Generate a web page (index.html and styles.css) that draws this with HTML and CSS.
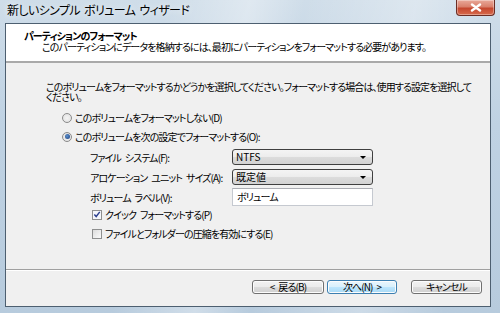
FILE: index.html
```html
<!DOCTYPE html>
<html lang="ja">
<head>
<meta charset="utf-8">
<title>新しいシンプル ボリューム ウィザード</title>
<link rel="stylesheet" href="styles.css">
</head>
<body>
<div class="window">
  <div class="titlebar">
    <span class="title">新しいシンプル ボリューム ウィザード</span>
    <span class="close"><svg width="14" height="9" viewBox="0 0 14 9"><path d="M3 1.5 L11 7.5 M11 1.5 L3 7.5" stroke="#fff" stroke-width="2.4" stroke-linecap="round"/></svg></span>
  </div>
  <div class="client">
    <div class="header">
      <div class="h-title">パーティションのフォーマット</div>
      <div class="h-sub">このパーティションにデータを格納するには、最初にパーティションをフォーマットする必要があります。</div>
    </div>
    <div class="content">
      <p class="intro">このボリュームをフォーマットするかどうかを選択してください。フォーマットする場合は、使用する設定を選択してください。</p>
      <div class="radio-row first"><span class="radio"></span><span>このボリュームをフォーマットしない(D)</span></div>
      <div class="radio-row"><span class="radio checked"></span><span>このボリュームを次の設定でフォーマットする(O):</span></div>
      <div class="form">
        <span class="label">ファイル システム(F):</span>
        <span class="combo"><span>NTFS</span><i class="arrow"></i></span>
        <span class="label">アロケーション ユニット サイズ(A):</span>
        <span class="combo"><span>既定値</span><i class="arrow"></i></span>
        <span class="label">ボリューム ラベル(V):</span>
        <span class="textbox">ボリューム</span>
      </div>
      <div class="check-row"><span class="check checked"><svg width="9" height="9" viewBox="0 0 9 9"><path d="M1.5 4.5 L3.6 6.8 L7.6 1.6" stroke="#2b3f8f" stroke-width="1.6" fill="none"/></svg></span><span>クイック フォーマットする(P)</span></div>
      <div class="check-row"><span class="check"></span><span>ファイルとフォルダーの圧縮を有効にする(E)</span></div>
    </div>
    <div class="footer">
      <span class="btn">&lt; 戻る(B)</span>
      <span class="btn default">次へ(N) &gt;</span>
      <span class="btn cancel">キャンセル</span>
    </div>
  </div>
</div>
</body>
</html>
```
FILE: styles.css
```css
* { box-sizing: border-box; }
html, body { margin: 0; padding: 0; }
body {
  width: 500px;
  height: 313px;
  overflow: hidden;
  font-family: "Noto Sans CJK JP", "Noto Sans", sans-serif;
  font-feature-settings: "palt";
  font-size: 10px;
  letter-spacing: -0.9px;
  word-spacing: 2.5px;
  color: #000;
}
.window {
  width: 500px;
  height: 313px;
  display: flex;
  flex-direction: column;
  background:
    linear-gradient(100deg, rgba(255,255,255,0) 30%, rgba(255,255,255,0.35) 45%, rgba(255,255,255,0) 55%, rgba(255,255,255,0.3) 75%, rgba(255,255,255,0) 90%),
    linear-gradient(180deg, #cfdde9 0%, #bfd2e3 40%, #b7cbdd 100%);
  padding: 0 9px 6px 5px;
}
.titlebar {
  height: 23px;
  display: flex;
  align-items: flex-start;
  flex: none;
  margin-right: -9px;
}
.title {
  padding-left: 2px;
  margin-top: 3px;
  font-size: 12px;
  letter-spacing: -0.6px;
  word-spacing: 2px;
  line-height: 14px;
  color: #000;
  text-shadow: 0 0 6px rgba(255,255,255,0.9);
}
.close {
  margin-left: auto;
  margin-right: 5px;
  width: 39px;
  height: 16px;
  border: 1px solid #6b2d24;
  border-top: none;
  border-radius: 0 0 4px 4px;
  background: linear-gradient(180deg, #e9a99a 0%, #d9806c 45%, #c5472f 55%, #d76b4c 100%);
  display: flex;
  align-items: center;
  justify-content: center;
  box-shadow: inset 0 0 0 1px rgba(255,255,255,0.35);
}
.client {
  flex: 1;
  display: flex;
  flex-direction: column;
  border: 1px solid #4d5f70;
  background: #f0f0f0;
}
.header {
  background: #fff;
  height: 39px;
  border-bottom: 2px solid #a9a9a9;
  padding: 6px 0 0 18px;
  flex: none;
}
.h-title {
  font-weight: bold;
  line-height: 11px;
}
.h-sub {
  padding-left: 18px;
  line-height: 11px;
}
.content {
  flex: 1;
  padding: 19px 20px 0 40px;
}
.intro {
  margin: 0;
  line-height: 10px;
  width: 428px;
}
.radio-row {
  display: flex;
  align-items: center;
  height: 19px;
  padding-left: 16px;
  gap: 3px;
}
.radio-row.first { margin-top: 6px; }
.radio {
  width: 10px;
  height: 10px;
  border-radius: 50%;
  border: 1px solid #8b8b8b;
  background: radial-gradient(circle, #f4f4f4 0%, #dedede 100%);
  display: flex;
  align-items: center;
  justify-content: center;
}
.radio.checked::after {
  content: "";
  width: 5px;
  height: 5px;
  border-radius: 50%;
  background: radial-gradient(circle at 40% 40%, #5a8fcb, #1d3f7f);
}
.form {
  display: grid;
  grid-template-columns: 142px 141px;
  grid-auto-rows: 20px;
  padding-left: 44px;
  align-items: center;
  margin-top: 1px;
}
.label { white-space: nowrap; }
.combo {
  height: 16px;
  border: 1px solid #3f3f3f;
  border-radius: 3px;
  background: linear-gradient(180deg, #f4f4f4 0%, #ececec 50%, #dcdcdc 51%, #d2d2d2 100%);
  display: flex;
  align-items: center;
  padding: 0 6px 0 3px;
  line-height: 14px;
  letter-spacing: 0;
}
.arrow {
  margin-left: auto;
  width: 0;
  height: 0;
  border-left: 3px solid transparent;
  border-right: 3px solid transparent;
  border-top: 3px solid #000;
}
.textbox {
  height: 18px;
  border: 1px solid #c5c9d0;
  border-top-color: #abadb3;
  background: #fff;
  padding: 0 4px;
  line-height: 16px;
}
.check-row {
  display: flex;
  align-items: center;
  height: 19px;
  padding-left: 46px;
  gap: 3px;
}
.form + .check-row { margin-top: -2px; }
.check {
  width: 10px;
  height: 10px;
  border: 1px solid #8e8f8f;
  background: linear-gradient(135deg, #dcdcdc, #fbfbfb);
  display: flex;
  align-items: center;
  justify-content: center;
}
.check.checked { background: #f4f6fb; }
.footer {
  height: 37px;
  flex: none;
  border-top: 1px solid #a0a0a0;
  box-shadow: inset 0 1px 0 #fff;
  display: flex;
  align-items: flex-start;
  padding: 10px 0 0 246px;
  gap: 3px;
}
.btn {
  width: 72px;
  height: 14px;
  border: 1px solid #707070;
  border-radius: 3px;
  background: linear-gradient(180deg, #f2f2f2 0%, #ebebeb 50%, #dddddd 51%, #cfcfcf 100%);
  box-shadow: inset 0 0 0 1px #fcfcfc;
  display: flex;
  align-items: center;
  justify-content: center;
  line-height: 12px;
}
.btn.default {
  width: 70px;
  border-color: #3c7fb1;
  background: linear-gradient(180deg, #eaf6fd 0%, #d9f0fc 50%, #bee6fd 51%, #a7d9f5 100%);
}
.btn.cancel { margin-left: 11px; width: 71px; }
```
